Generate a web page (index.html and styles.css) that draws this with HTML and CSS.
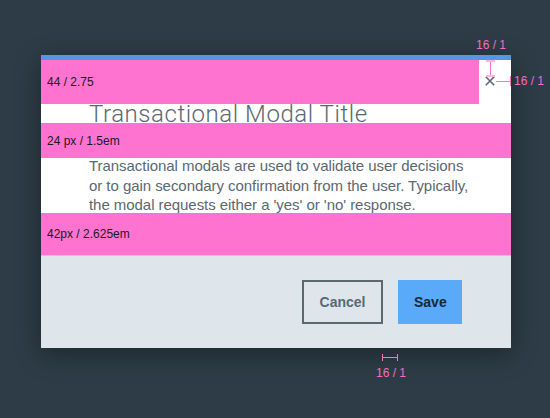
FILE: index.html
```html
<!DOCTYPE html>
<html>
<head>
<meta charset="utf-8">
<link rel="stylesheet" href="styles.css">
</head>
<body>
<div class="modal">
  <div class="modal-body">
    <h2 class="title">Transactional Modal Title</h2>
    <p class="text">Transactional modals are used to validate user decisions<br>or to gain secondary confirmation from the user. Typically,<br>the modal requests either a 'yes' or 'no' response.</p>
  </div>
  <div class="footer">
    <button class="btn btn-secondary">Cancel</button>
    <button class="btn btn-primary">Save</button>
  </div>

  <button class="close" aria-label="close">
    <svg width="10" height="10" viewBox="0 0 10 10"><path d="M0.8 0.8 L9.2 9.2 M9.2 0.8 L0.8 9.2" stroke="#5a6872" stroke-width="1.6" fill="none"/></svg>
  </button>

  <div class="spec spec-a"><span>44 / 2.75</span></div>
  <div class="spec spec-b"><span>24 px / 1.5em</span></div>
  <div class="spec spec-c"><span>42px / 2.625em</span></div>

  <div class="note note-top">16 / 1</div>
  <div class="vline"></div>
  <div class="cap cap-top"></div>
  <div class="cap cap-bottom"></div>
  <div class="hline"></div>
  <div class="hcap"></div>
  <div class="note note-right">16 / 1</div>

  <div class="bracket"></div>
  <div class="note note-bottom">16 / 1</div>
</div>
</body>
</html>
```
FILE: styles.css
```css
html, body {
  margin: 0;
  padding: 0;
}
body {
  width: 550px;
  height: 418px;
  background: #2d3c46;
  font-family: "Liberation Sans", Arial, sans-serif;
  overflow: hidden;
}
.modal {
  position: relative;
  margin: 55px 0 0 41px;
  width: 470px;
  background: #ffffff;
  border-top: 5px solid #5596e6;
  box-shadow: 0 6px 24px rgba(0, 0, 0, 0.35);
}
.modal-body {
  padding: 40px 48px 0;
}
.title {
  margin: 0;
  font-family: Roboto, "Liberation Sans", sans-serif;
  font-weight: 300;
  font-size: 24px;
  line-height: 28px;
  letter-spacing: 0.55px;
  color: #5a6872;
}
.text {
  margin: 28px 0 0;
  font-family: "Liberation Sans", Arial, sans-serif;
  font-size: 15px;
  line-height: 19.5px;
  letter-spacing: -0.05px;
  color: #5a6872;
  width: 400px;
  white-space: nowrap;
}
.footer {
  margin-top: 41.5px;
  background: #dfe6eb;
  padding: 24px 49px 24px;
  display: flex;
  justify-content: flex-end;
  gap: 15px;
}
.btn {
  font-family: "Liberation Sans", Arial, sans-serif;
  font-weight: 700;
  font-size: 14px;
  height: 44px;
  border: 0;
  margin: 0;
  cursor: pointer;
}
.btn-secondary {
  background: transparent;
  border: 2px solid #5a6872;
  color: #5a6872;
  padding: 0 14px;
  width: 81px;
}
.btn-primary {
  background: #5aaafa;
  color: #152935;
  padding: 0 16px;
  width: 64px;
}
.close {
  position: absolute;
  left: 444px;
  top: 16px;
  width: 10px;
  height: 10px;
  padding: 0;
  border: 0;
  background: transparent;
  display: block;
}
.close svg {
  display: block;
}
.spec {
  position: absolute;
  left: 0;
  background: #ff73d0;
  display: flex;
  align-items: center;
  padding-left: 6px;
  box-sizing: border-box;
  font-family: "Liberation Sans", Arial, sans-serif;
  font-size: 12px;
  color: #1a1a1a;
}
.spec-a {
  top: 0;
  width: 438px;
  height: 44px;
}
.spec-b {
  top: 63px;
  width: 470px;
  height: 35px;
}
.spec-c {
  top: 153px;
  width: 470px;
  height: 43px;
  border-bottom: 1px solid #f2b3de;
}
.note {
  position: absolute;
  font-family: "Liberation Sans", Arial, sans-serif;
  font-size: 12px;
  line-height: 14px;
  color: #f06dc8;
  white-space: nowrap;
}
.note-top {
  left: 435px;
  top: -22px;
}
.note-right {
  left: 473px;
  top: 14px;
}
.note-bottom {
  left: 335px;
  top: 306px;
}
.vline {
  position: absolute;
  left: 449px;
  top: 0;
  width: 1px;
  height: 16px;
  background: #ff73d0;
}
.cap {
  position: absolute;
  left: 445px;
  width: 9px;
  height: 2px;
  background: #ffb3e6;
}
.cap-top { top: 0; }
.cap-bottom { top: 15px; }
.hline {
  position: absolute;
  left: 455px;
  top: 21px;
  width: 14px;
  height: 1px;
  background: #ff73d0;
}
.hcap {
  position: absolute;
  left: 469px;
  top: 16px;
  width: 1px;
  height: 10px;
  background: #ff73d0;
}
.bracket {
  position: absolute;
  left: 341px;
  top: 294px;
  width: 14px;
  height: 7px;
  border-left: 1px solid #ff73d0;
  border-right: 1px solid #ff73d0;
  background: linear-gradient(#ff73d0, #ff73d0) center / 100% 1px no-repeat;
}
```
